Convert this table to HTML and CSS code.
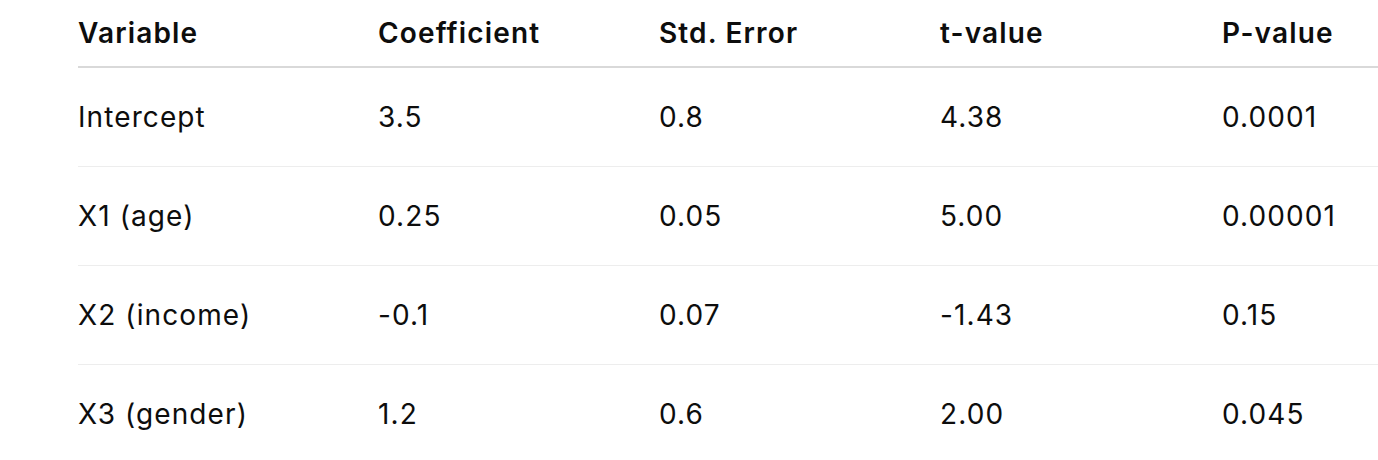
FILE: index.html
```html
<!DOCTYPE html>
<html>
<head>
<meta charset="utf-8">
<link rel="stylesheet" href="styles.css">
</head>
<body>
<div class="wrap">
<table class="reg">
<colgroup>
<col class="c1"><col class="c2"><col class="c3"><col class="c4"><col class="c5">
</colgroup>
<thead>
<tr><th>Variable</th><th>Coefficient</th><th>Std. Error</th><th>t-value</th><th>P-value</th></tr>
</thead>
<tbody>
<tr><td>Intercept</td><td>3.5</td><td>0.8</td><td>4.38</td><td>0.0001</td></tr>
<tr><td>X1 (age)</td><td>0.25</td><td>0.05</td><td>5.00</td><td>0.00001</td></tr>
<tr><td>X2 (income)</td><td>-0.1</td><td>0.07</td><td>-1.43</td><td>0.15</td></tr>
<tr><td>X3 (gender)</td><td>1.2</td><td>0.6</td><td>2.00</td><td>0.045</td></tr>
</tbody>
</table>
</div>
</body>
</html>
```
FILE: styles.css
```css
html, body {
  margin: 0;
  padding: 0;
  background: #ffffff;
}
body {
  font-family: Inter, "Noto Sans", "Liberation Sans", sans-serif;
  color: #0d0d0d;
  overflow: hidden;
}
.wrap {
  padding-left: 78px;
}
.reg {
  border-collapse: collapse;
  table-layout: fixed;
  width: 1300px;
  font-size: 28px;
}
.c1 { width: 300px; }
.c2 { width: 281px; }
.c3 { width: 281px; }
.c4 { width: 282px; }
.c5 { width: auto; }
.reg th {
  text-align: left;
  font-weight: 600;
  letter-spacing: 1.15px;
  height: 66px;
  padding: 0;
  vertical-align: middle;
  border-bottom: 2px solid #d9d9d9;
  white-space: nowrap;
}
.reg td {
  height: 98px;
  padding: 0;
  letter-spacing: 1.1px;
  vertical-align: middle;
  border-bottom: 1px solid #ededed;
  white-space: nowrap;
}
```
